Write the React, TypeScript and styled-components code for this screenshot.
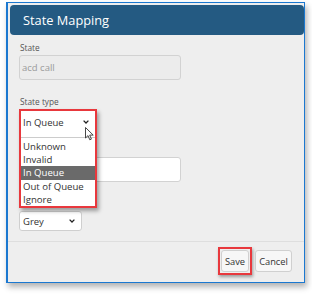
import React from "react";
import styled, { createGlobalStyle } from "styled-components";

const GlobalStyle = createGlobalStyle`
  html, body { margin: 0; padding: 0; background: #ffffff; }
  body { font-family: "Open Sans", "Noto Sans", Arial, sans-serif; }
  * { box-sizing: border-box; }
`;

const Page = styled.div`
  width: 312px;
  height: 295px;
  padding: 2px 0 0 6px;
`;

const Dialog = styled.div`
  width: 299px;
  height: 281px;
  display: flex;
  flex-direction: column;
  background: #eeeeee;
  border: 1px solid #1b78d0;
  border-left-width: 2px;
  box-shadow: 2px 4px 6px rgba(0, 0, 0, 0.3);
`;

const Header = styled.div`
  height: 30px;
  margin: 2px 0 0 2px;
  display: flex;
  align-items: center;
  padding-left: 13px;
  background: #245a82;
  border-radius: 4px;
`;

const Title = styled.h1`
  margin: 0;
  font-size: 12.8px;
  font-weight: 400;
  color: #ffffff;
  line-height: 1;
`;

const Body = styled.div`
  display: flex;
  flex-direction: column;
  gap: 16px;
  padding: 7px 0 9px 11px;
`;

const Field = styled.div`
  display: flex;
  flex-direction: column;
  gap: 1px;
`;

const Label = styled.label`
  display: block;
  height: 12px;
  line-height: 12px;
  padding-left: 1px;
  font-size: 8.3px;
  color: #555555;
`;

const TextBox = styled.div<{ $disabled?: boolean }>`
  width: 162px;
  height: 25px;
  display: flex;
  align-items: center;
  padding-left: 2px;
  font-size: 9.5px;
  color: #9a9a9a;
  background: ${(p) => (p.$disabled ? "#ececec" : "#ffffff")};
  border: 1px solid #d2d2d2;
  border-radius: 3px;
`;

const SelectWrap = styled.div`
  position: relative;
  width: 78px;
  height: 19px;
`;

const SelectFace = styled.div<{ $w: number; $h: number }>`
  width: ${(p) => p.$w}px;
  height: ${(p) => p.$h}px;
  display: flex;
  align-items: center;
  justify-content: space-between;
  padding: 0 6px 0 3px;
  font-size: 9.5px;
  color: #333333;
  background: #ffffff;
  border: 1px solid #cfcfcf;
  border-radius: 3px;
`;

const Chevron = () => (
  <svg width="6" height="4" viewBox="0 0 6 4">
    <path d="M0.6 0.6 L3 3 L5.4 0.6" fill="none" stroke="#222" strokeWidth="1.3" />
  </svg>
);

const OpenList = styled.div`
  position: absolute;
  top: 0;
  left: 0;
  width: 78px;
  border: 2px solid #e8383d;
  background: #ffffff;
  box-shadow: 2px 3px 4px rgba(0, 0, 0, 0.35);
  z-index: 2;
`;

const OpenFace = styled.div`
  height: 27px;
  display: flex;
  align-items: center;
  justify-content: space-between;
  padding: 0 6px 4px 2px;
  font-size: 9.5px;
  color: #333333;
  border-bottom: 1px solid #cccccc;
`;

const Options = styled.div`
  padding-top: 2px;
`;

const Option = styled.div<{ $active?: boolean }>`
  height: 13.2px;
  line-height: 13.2px;
  padding-left: 2px;
  font-size: 9.6px;
  color: ${(p) => (p.$active ? "#ffffff" : "#333333")};
  background: ${(p) => (p.$active ? "#6a6a6a" : "transparent")};
  white-space: nowrap;
`;

const Cursor = styled.svg`
  position: absolute;
  left: 66px;
  top: 18px;
  z-index: 3;
`;

const Footer = styled.div`
  margin-top: auto;
  display: flex;
  justify-content: flex-end;
  gap: 6px;
  padding: 8px 12px 10px 0;
  border-top: 1px solid #dedede;
`;

const ButtonSlot = styled.div`
  position: relative;
  display: flex;
`;

const Button = styled.button<{ $w: number }>`
  width: ${(p) => p.$w}px;
  height: 22px;
  padding: 0;
  margin: 0;
  font-family: inherit;
  font-size: 9.3px;
  color: #333333;
  background: #f7f7f7;
  border: 1px solid #d0d0d0;
  border-radius: 3px;
`;

const Highlight = styled.div`
  position: absolute;
  inset: -3px;
  border: 2px solid #e8383d;
  box-shadow: 1px 2px 3px rgba(0, 0, 0, 0.35);
  pointer-events: none;
`;

const options = ["Unknown", "Invalid", "In Queue", "Out of Queue", "Ignore"];

export default function App() {
  return (
    <>
      <GlobalStyle />
      <Page>
        <Dialog>
          <Header>
            <Title>State Mapping</Title>
          </Header>
          <Body>
            <Field>
              <Label>State</Label>
              <TextBox $disabled>acd call</TextBox>
            </Field>
            <Field>
              <Label>State type</Label>
              <SelectWrap>
                <OpenList>
                  <OpenFace>
                    In Queue
                    <Chevron />
                  </OpenFace>
                  <Options>
                    {options.map((o) => (
                      <Option key={o} $active={o === "In Queue"}>
                        {o}
                      </Option>
                    ))}
                  </Options>
                </OpenList>
                <Cursor width="10" height="14" viewBox="0 0 10 14">
                  <path
                    d="M0.5 0.5 L0.5 11 L3 8.6 L4.8 12.8 L6.4 12.1 L4.7 8.1 L8.2 8.1 Z"
                    fill="#ffffff"
                    stroke="#333333"
                    strokeWidth="0.9"
                    strokeLinejoin="round"
                  />
                </Cursor>
              </SelectWrap>
            </Field>
            <Field>
              <Label aria-label="Description" />
              <TextBox />
            </Field>
            <Field>
              <Label aria-label="Color" />
              <SelectFace $w={63} $h={20}>
                Grey
                <Chevron />
              </SelectFace>
            </Field>
          </Body>
          <Footer>
            <ButtonSlot>
              <Button $w={28}>Save</Button>
              <Highlight />
            </ButtonSlot>
            <ButtonSlot>
              <Button $w={37}>Cancel</Button>
            </ButtonSlot>
          </Footer>
        </Dialog>
      </Page>
    </>
  );
}
